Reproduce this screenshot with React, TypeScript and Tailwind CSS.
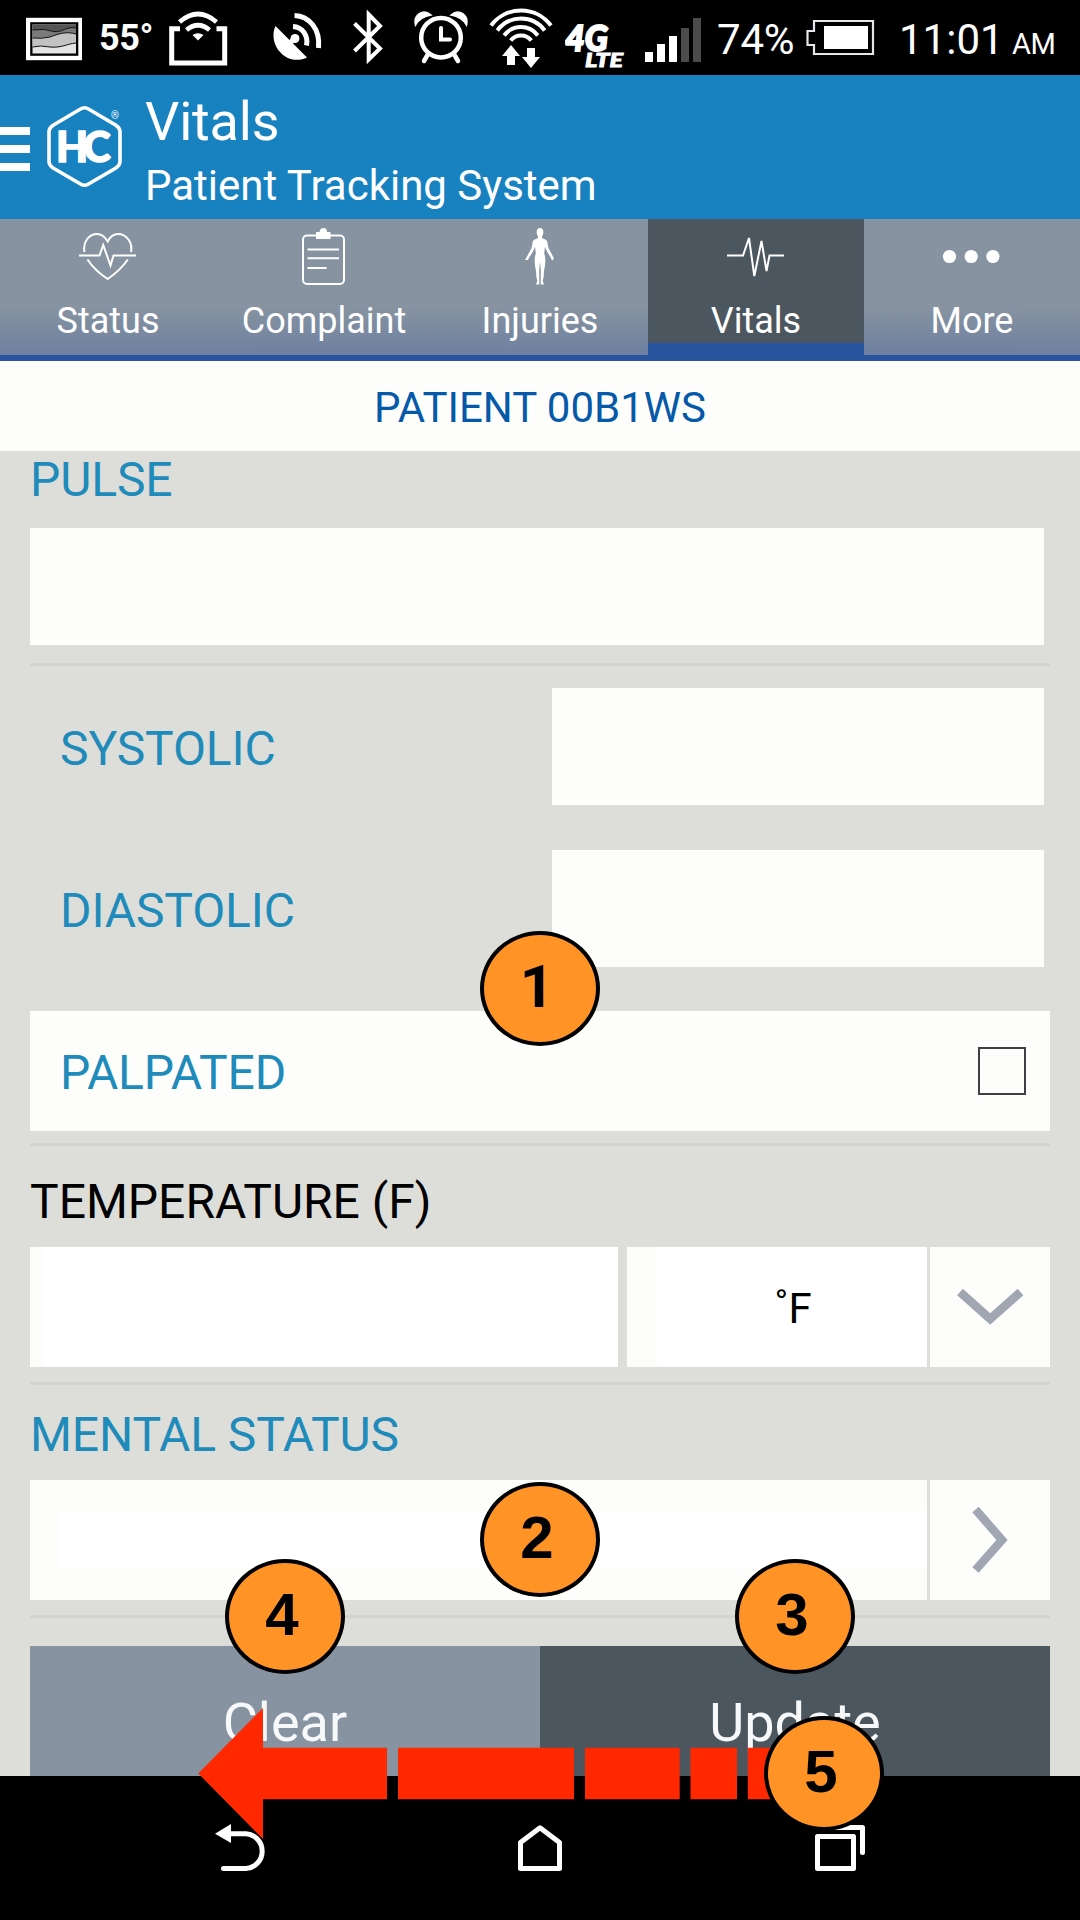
import React from "react";

function StatusBar() {
  return (
    <div className="flex h-[75px] items-start bg-black text-white">
      {/* picture */}
      <svg className="ml-[26px] h-[75px] w-[56px] shrink-0" viewBox="26 0 56 75">
        <rect x="28" y="20" width="52.5" height="38" fill="#000" stroke="#fff" strokeWidth="4.4" />
        <rect x="32.5" y="24.5" width="43.5" height="29" fill="#e4e4e4" />
        <path d="M32.5 24.5H76V35C66 31 58 34 50 37Q42 39 32.5 38Z" fill="#7a7a7a" />
        <path d="M32.5 24.5H76V28C66 26 62 33 54 31Q44 28 32.5 30Z" fill="#555" />
        <path d="M32.5 38Q42 39 50 37C58 34 66 31 76 34V43C66 44 62 49 50 47Q40 45 32.5 47Z" fill="#c2c2c2" />
        <path d="M32.5 30Q44 28 54 31.500C62 33 66 26 76 28M32.500 38Q42 39 50 37C58 34 66 31 76 34M32.500 47Q40 45 50 47C62 48 66 44 76 43" fill="none" stroke="#111" strokeWidth="1" />
      </svg>
      <div className="ml-[17px] w-[55px] whitespace-nowrap text-[36px] leading-[77px] font-bold tracking-[-0.4px]">55°</div>
      {/* hotspot */}
      <svg className="ml-[14px] h-[75px] w-[60px] shrink-0" viewBox="168 0 60 75" fill="none" stroke="#fff" strokeWidth="5">
        <path d="M180 28.700H171.700V63H224.700V28.700H216.500" />
        <path d="M179.500 22Q198 6 216.500 22M186.500 30Q198 20.500 209.500 30" strokeWidth="4.6" />
        <path d="M192.500 35Q198 31.500 203.500 35L198 40.500Z" fill="#fff" stroke="none" />
      </svg>
      {/* satellite dish */}
      <svg className="ml-[43px] h-[75px] w-[52px] shrink-0" viewBox="271 0 52 75" fill="none" stroke="#fff" strokeWidth="5">
        <path d="M275.500 26L307 57.500C299 61.500 288 60.500 281 53C273.500 46 271.500 34 275.500 26Z" fill="#fff" stroke="none" />
        <circle cx="295" cy="38.500" r="4.500" fill="#fff" stroke="none" />
        <path d="M289 44L294 39" />
        <path d="M294.500 15.500C309 16 320.500 29 318.500 48M293 26.500C302 27 308.500 35 306.500 45.500" />
      </svg>
      {/* bluetooth */}
      <svg className="ml-[28px] h-[75px] w-[34px] shrink-0" viewBox="351 0 34 75" fill="none" stroke="#fff" strokeWidth="4">
        <path d="M354.500 23.500L380 48.500L368.700 59.500V14.500L380 26L354.500 51" />
      </svg>
      {/* alarm */}
      <svg className="ml-[29px] h-[75px] w-[54px] shrink-0" viewBox="414 0 54 75" fill="none" stroke="#fff" strokeWidth="4.500">
        <circle cx="441" cy="37.700" r="19.800" />
        <path d="M441 28V39.500H450" strokeLinecap="round" strokeWidth="4" />
        <path d="M427.500 55L424 61M454.500 55L458 61" strokeLinecap="round" strokeWidth="4.500" />
        <path d="M415.500 25C413 15 423 8 431 15C424 16 419 19 415.500 25ZM466.500 25C469 15 459 8 451 15C458 16 463 19 466.500 25Z" fill="#fff" stroke="#fff" strokeWidth="1.500" />
      </svg>
      {/* wifi */}
      <svg className="ml-[21px] h-[75px] w-[64px] shrink-0" viewBox="489 0 64 75" fill="none" stroke="#fff" strokeWidth="4">
        <path d="M491 25.500A37.500 37.500 0 0 1 551 25.500M497.300 30.500A29.500 29.500 0 0 1 544.700 30.500M504.200 35.500A21 21 0 0 1 537.800 35.500M510.700 40.500A13 13 0 0 1 531.300 40.500" />
        <path d="M511 45L520 56H515V65H507V56H502ZM531 68L540 57H535V48H527V57H522Z" fill="#fff" stroke="none" />
      </svg>
      {/* network type */}
      <svg className="ml-[12px] h-[75px] w-[62px] shrink-0 font-['Lato']" viewBox="565 0 62 75" fill="#fff" stroke="#fff">
        <text x="565" y="51" fontSize="36" fontWeight="900" fontStyle="italic" textLength="43" lengthAdjust="spacingAndGlyphs" strokeWidth="2">4G</text>
        <text x="585" y="67" fontSize="18" fontWeight="900" fontStyle="italic" textLength="38" lengthAdjust="spacingAndGlyphs" strokeWidth=".8">LTE</text>
      </svg>
      <div className="ml-[18px] flex h-[62px] items-end gap-1">
        <div className="h-[10px] w-2 bg-white" />
        <div className="h-[18px] w-2 bg-white" />
        <div className="h-[26px] w-2 bg-white" />
        <div className="h-[34px] w-2 bg-[#4b4b4b]" />
        <div className="h-[44px] w-2 bg-[#4b4b4b]" />
      </div>
      <div className="ml-[16px] w-[80px] whitespace-nowrap text-[42px] leading-[79px] tracking-[-0.2px]">74%</div>
      <svg className="ml-[8px] h-[75px] w-[70px] shrink-0" viewBox="805 0 70 75">
        <path d="M814 21H873V54H814V45H807.500V31H814Z" fill="none" stroke="#e8e4ea" strokeWidth="2.200" />
        <rect x="824" y="26" width="44" height="23" fill="#fff" />
      </svg>
      <div className="ml-[24px] flex items-baseline whitespace-nowrap">
        <span className="w-[113px] text-[42px] leading-[79px]">11:01</span>
        <span className="text-[29px] tracking-[-0.5px]">AM</span>
      </div>
    </div>
  );
}

function Header() {
  return (
    <header className="flex h-36 items-start bg-[#1882c1] text-white">
      <div className="mt-[52px] flex w-[30px] flex-col gap-[10px]">
        <div className="h-2 bg-white" />
        <div className="h-2 bg-white" />
        <div className="h-2 bg-white" />
      </div>
      <svg className="ml-[15px] h-36 w-[80px]" viewBox="45 75 80 144">
        <path d="M80.500 109Q84.500 106.500 88.500 109L115.500 125Q120 128 120 131.500V161Q120 165.500 115.500 168.200L88.500 184Q84.500 186.500 80.500 184L53.500 168.200Q49 165.500 49 161V131.500Q49 128 53.500 125Z" fill="none" stroke="#fff" strokeWidth="3.600" />
        <text className="font-['Lato']" x="56" y="161.500" fontSize="41.500" fontWeight="900" fill="#fff" stroke="#fff" strokeWidth="1.400" textLength="54.500" lengthAdjust="spacing">HC</text>
        <text className="font-['Roboto']" x="115" y="119" fontSize="10" fill="#fff" textAnchor="middle">®</text>
      </svg>
      <div className="ml-5 flex flex-col">
        <h1 className="mt-[8px] text-[54px] leading-[77px] tracking-[-0.2px]">Vitals</h1>
        <p className="text-[42px] leading-[51px]">Patient Tracking System</p>
      </div>
    </header>
  );
}

function Tab({ label, active, children }: { label: string; active?: boolean; children: React.ReactNode }) {
  return (
    <div
      className={
        active
          ? "flex h-[142px] w-[216px] flex-col items-center border-b-[18px] border-[#29549f] bg-[#4c565f]"
          : "flex h-[142px] w-[216px] flex-col items-center border-b-[6px] border-[#29549f] bg-linear-to-b from-[#8793a1] from-65% to-[#6e80a0]"
      }
    >
      {children}
      <span className="text-[36px] leading-[61px]">{label}</span>
    </div>
  );
}

function Tabs() {
  const icon = "h-[72px] w-[60px] shrink-0";
  return (
    <nav className="flex text-white">
      <Tab label="Status">
        <svg className={icon} viewBox="78 219 60 72" fill="none" stroke="#fff" strokeWidth="2">
          <path d="M84.500 252C82.500 242 89 234 97 234C102 234 105 237 107.700 241.500C110 237 113 234 118 234C126 234 133 242 131 252M79 255.500H99.500L103.200 245L110.500 265.500L113.500 255.500H136M87.500 259.500C93 268 100 274 107.700 279C115 274 122 268 127.800 259.500" />
        </svg>
      </Tab>
      <Tab label="Complaint">
        <svg className={icon} viewBox="294.500 219 60 72" fill="none" stroke="#fff" strokeWidth="2">
          <rect x="303.500" y="235.500" width="41" height="48.500" rx="4" />
          <path d="M308 249.500H339.500M308 258.300H339.500M308 268H327" />
          <path d="M316.500 239V232H320Q320.500 228 324 228T327.500 232H331V239Z" fill="#fff" stroke="none" />
        </svg>
      </Tab>
      <Tab label="Injuries">
        <svg className={icon} viewBox="510 219 60 72" fill="#fff">
          <path d="M540 228C537 228 536.300 231 536.800 233.500Q537.200 235.500 538 236.500V238Q534 239.500 532.800 241Q532 248 530.500 250L527 256.500L525 260L528 260L529.500 257C532 253 534.500 249.500 535 246.500L535.800 253C534 259 534.500 265 536 271Q536 277 537.300 281L536 284.500H539.300L539.200 270L540 262L540.800 270L540.700 284.500H544L542.700 281Q544 277 544 271C545.500 265 546 259 544.200 253L545 246.500C545.500 249.500 548 253 550.500 257L552 260.500L554 259L553 256.500L549.500 250Q548 248 547.200 241Q546 239.500 542 238V236.500Q542.800 235.500 543.200 233.500C543.700 231 543 228 540 228Z" />
        </svg>
      </Tab>
      <Tab label="Vitals" active>
        <svg className={icon} viewBox="726 219 60 72" fill="none" stroke="#fff" strokeWidth="2">
          <path d="M727 255.500H743L749 238L754.300 276L761.500 241L766.500 271L769.500 255.500H784" />
        </svg>
      </Tab>
      <Tab label="More">
        <svg className={icon} viewBox="942.500 219 60 72" fill="#fff">
          <circle cx="950" cy="256.500" r="6.600" />
          <circle cx="971.700" cy="256.500" r="6.600" />
          <circle cx="993.400" cy="256.500" r="6.600" />
        </svg>
      </Tab>
    </nav>
  );
}

function Divider() {
  return <div className="h-[3px] bg-[#d3d3d3]" />;
}

function Badge({ n, place }: { n: number; place: string }) {
  const face = n === 1 ? "font-['Roboto']" : "font-['Liberation_Sans']";
  return (
    <div className={`absolute h-[115px] w-[120px] rounded-[50%] border-4 border-black bg-[#ff9326] pr-[6px] text-center text-[60px] leading-[104px] font-bold text-black ${face} ${place}`}>
      {n}
    </div>
  );
}

function Form() {
  return (
    <main className="flex h-[1325px] flex-col bg-[#ddded9] px-[30px] text-[48px] tracking-[-0.12px] text-[#1f8bba]">
      <h2 className="h-[77px] leading-[57px]">PULSE</h2>
      <div className="mr-[6px] h-[117px] bg-[#fdfefc]" />
      <div className="h-[18px]" />
      <Divider />
      <div className="mt-[22px] flex h-[117px] items-center justify-between pr-[6px] pl-[30px]">
        <span className="pt-1">SYSTOLIC</span>
        <div className="h-full w-[492px] bg-[#fdfefc]" />
      </div>
      <div className="mt-[45px] flex h-[117px] items-center justify-between pr-[6px] pl-[30px]">
        <span className="pt-1">DIASTOLIC</span>
        <div className="h-full w-[492px] bg-[#fdfefc]" />
      </div>
      <div className="mt-[44px] mb-3 flex h-[120px] items-center justify-between bg-[#fdfefc] pr-6 pl-[30px]">
        <span className="pt-1">PALPATED</span>
        <div className="size-12 border-2 border-[#3c4045]" />
      </div>
      <Divider />
      <h2 className="h-[101px] pt-[10px] leading-[91px] tracking-normal text-black">TEMPERATURE (F)</h2>
      <div className="mb-[15px] flex h-[120px]">
        <div className="w-[588px] border-l-[14px] border-[#fdfefc] bg-white" />
        <div className="ml-[9px] w-[300px] border-l-[30px] border-[#fdfefc] bg-white pl-[2px] text-center text-[42px] leading-[123px] text-black">˚F</div>
        <div className="ml-[3px] w-[120px] bg-[#fdfefc]">
          <svg className="size-full" viewBox="930 1247 120 120" fill="none" stroke="#a0a7b3" strokeWidth="8.500">
            <path d="M960 1292L990.200 1319L1020.500 1292" />
          </svg>
        </div>
      </div>
      <Divider />
      <h2 className="h-[95px] pt-1 leading-[91px]">MENTAL STATUS</h2>
      <div className="mb-[15px] flex h-[120px]">
        <div className="w-[897px] bg-[#fdfefc] pt-[31px] pl-[30px]">
          <div className="h-[57px] bg-white" />
        </div>
        <div className="ml-[3px] w-[120px] bg-[#fdfefc]">
          <svg className="size-full" viewBox="930 1480 120 120" fill="none" stroke="#a0a7b3" strokeWidth="8.500">
            <path d="M975.500 1509.500L1002 1540L975.500 1570" />
          </svg>
        </div>
      </div>
      <Divider />
      <div className="mt-7 flex h-[130px] text-center text-[54px] leading-[153px] tracking-normal text-[#f6f8fa]">
        <div className="flex-1 bg-[#8793a1]">Clear</div>
        <div className="flex-1 bg-[#4c565f]">Update</div>
      </div>
    </main>
  );
}

function NavBar() {
  return (
    <footer className="flex h-36 items-center justify-between bg-black px-[210px]">
      <svg className="h-36 w-[60px]" viewBox="210 1776 60 144" fill="none" stroke="#fff" strokeWidth="5">
        <path d="M229 1833.700H246A17.500 17.500 0 0 1 246 1868.600H223.500" strokeLinecap="round" />
        <path d="M215 1833.700L231 1824V1843Z" fill="#fff" stroke="none" />
      </svg>
      <svg className="h-36 w-[60px]" viewBox="510 1776 60 144" fill="none" stroke="#fff" strokeWidth="5" strokeLinejoin="round">
        <path d="M540 1827.800L559.500 1842.500V1868.500H520.500V1842.500Z" />
      </svg>
      <svg className="h-36 w-[60px]" viewBox="810 1776 60 144" fill="none" stroke="#fff" strokeWidth="5" strokeLinejoin="round" strokeLinecap="round">
        <rect x="817.500" y="1836.500" width="36" height="32" />
        <path d="M828 1827.500H862.500V1852.500" />
      </svg>
    </footer>
  );
}

export default function App() {
  return (
    <div className="relative h-[1920px] w-[1080px] overflow-hidden bg-[#ddded9] font-['Roboto',sans-serif]">
      <StatusBar />
      <Header />
      <Tabs />
      <div className="h-[90px] bg-[#fdfefc] text-center text-[42px] leading-[93px] text-[#0559a8]">PATIENT 00B1WS</div>
      <Form />
      <NavBar />
      <svg className="absolute top-[1706px] left-[196px] h-[136px] w-[600px]" viewBox="196 1706 600 136" fill="#ff2800">
        <path d="M198.300 1773.500L263 1708V1747.700H387V1799.300H263V1839Z" />
        <path d="M398 1747.700H574V1799.300H398ZM585 1747.700H679.700V1799.300H585ZM690.500 1747.700H737V1799.300H690.500ZM747.800 1747.700H790V1799.300H747.800Z" />
      </svg>
      <Badge n={1} place="left-[480px] top-[931px]" />
      <Badge n={2} place="left-[480px] top-[1482px]" />
      <Badge n={4} place="left-[225px] top-[1559px]" />
      <Badge n={3} place="left-[735px] top-[1559px]" />
      <Badge n={5} place="left-[764px] top-[1716px]" />
    </div>
  );
}
